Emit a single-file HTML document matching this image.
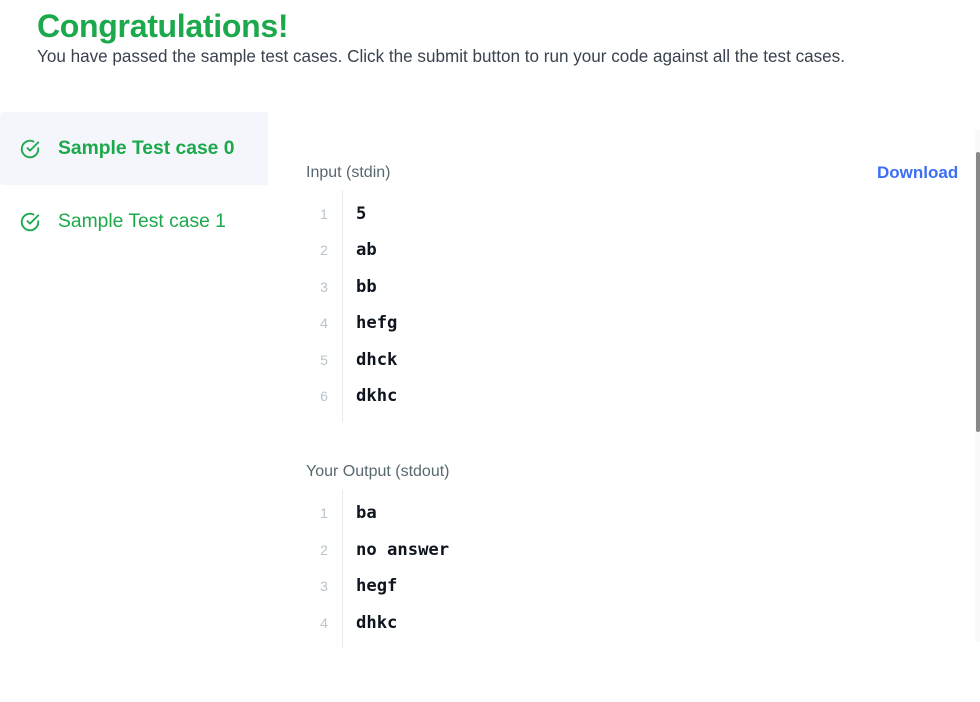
<!DOCTYPE html>
<html><head><meta charset="utf-8"><style>
*{margin:0;padding:0;box-sizing:border-box}
body{width:980px;height:702px;background:#fff;font-family:"Liberation Sans",sans-serif;position:relative;overflow:hidden}
.abs{position:absolute;white-space:nowrap}
h1{position:absolute;left:37px;top:8px;font-size:32px;font-weight:bold;color:#1ba94c;letter-spacing:-0.3px}
.sub{left:37px;top:47px;font-size:17.1px;color:#39424e}
.tab0{position:absolute;left:0;top:112px;width:268px;height:73px;background:#f5f6fb;border-radius:4px 0 0 4px}
.tab{position:absolute;left:19px;font-size:19.3px;color:#1ba94c;display:flex;align-items:center}
.tab svg{margin-right:17px}
.lbl{font-size:16px;color:#576871}
.dl{left:877px;top:163px;font-size:17px;font-weight:bold;color:#3b6ff5}
.num{position:absolute;width:30px;text-align:center;left:309px;font-family:"Liberation Sans",sans-serif;font-size:14px;color:#b7c4cc}
.code{position:absolute;left:356px;font-family:"DejaVu Sans Mono","Liberation Mono",monospace;font-weight:bold;font-size:17.2px;color:#0e141e}
.gut{position:absolute;left:342px;width:1px;background:#e6ecef}
</style></head><body>
<h1>Congratulations!</h1>
<div class="abs sub">You have passed the sample test cases. Click the submit button to run your code against all the test cases.</div>
<div class="tab0"></div>
<div class="tab" style="top:138px;font-weight:bold"><svg width="22" height="22" viewBox="0 0 20 20" fill="none" stroke="#1ba94c" stroke-width="1.7" stroke-linecap="round" stroke-linejoin="round"><path d="M17.5 9.3v.7a7.5 7.5 0 1 1-4.4-6.8"/><path d="M17.5 4 10 11.5 7.7 9.2"/></svg>Sample Test case 0</div>
<div class="tab" style="top:211px"><svg width="22" height="22" viewBox="0 0 20 20" fill="none" stroke="#1ba94c" stroke-width="1.7" stroke-linecap="round" stroke-linejoin="round"><path d="M17.5 9.3v.7a7.5 7.5 0 1 1-4.4-6.8"/><path d="M17.5 4 10 11.5 7.7 9.2"/></svg>Sample Test case 1</div>
<div class="abs lbl" style="left:306px;top:164px">Input (stdin)</div>
<div class="abs dl">Download</div>
<div class="gut" style="top:190px;height:232px"></div>
<div class="num" style="top:206px">1</div><div class="code" style="top:204px">5</div>
<div class="num" style="top:242px">2</div><div class="code" style="top:240px">ab</div>
<div class="num" style="top:279px">3</div><div class="code" style="top:277px">bb</div>
<div class="num" style="top:315px">4</div><div class="code" style="top:313px">hefg</div>
<div class="num" style="top:352px">5</div><div class="code" style="top:350px">dhck</div>
<div class="num" style="top:388px">6</div><div class="code" style="top:386px">dkhc</div>
<div class="abs lbl" style="left:306px;top:463px">Your Output (stdout)</div>
<div class="gut" style="top:490px;height:158px"></div>
<div class="num" style="top:505px">1</div><div class="code" style="top:503px">ba</div>
<div class="num" style="top:542px">2</div><div class="code" style="top:540px">no answer</div>
<div class="num" style="top:578px">3</div><div class="code" style="top:576px">hegf</div>
<div class="num" style="top:615px">4</div><div class="code" style="top:613px">dhkc</div>
<div style="position:absolute;left:975px;top:130px;width:5px;height:512px;background:#f9f9f9"></div>
<div style="position:absolute;left:976px;top:152px;width:4px;height:280px;background:#888;border-radius:2px"></div>
</body></html>
